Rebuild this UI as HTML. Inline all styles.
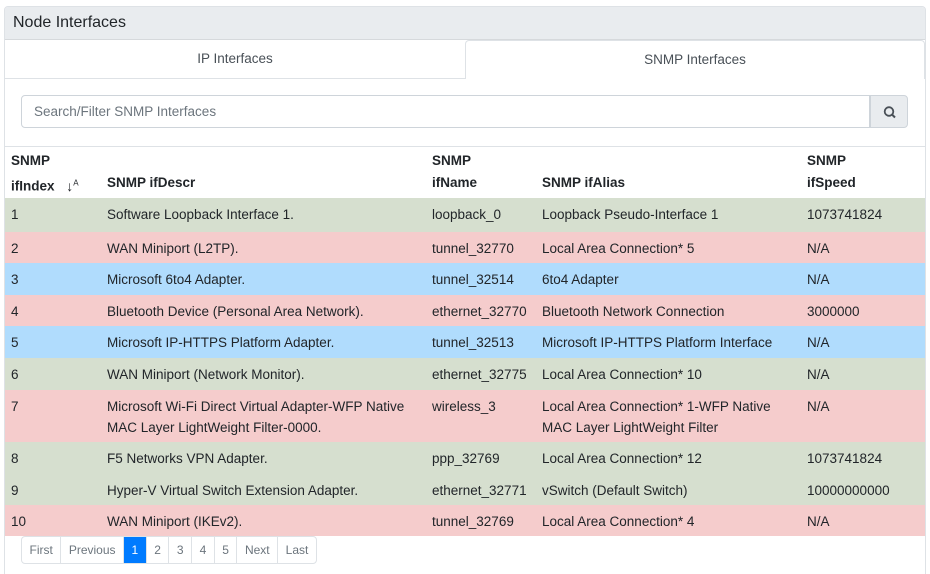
<!DOCTYPE html>
<html style="overflow:hidden"><head><style>
html,body{overflow:hidden}
body{margin:0;background:#fff;font-family:"Liberation Sans",sans-serif;font-size:13.5px;color:#212529;width:930px;height:574px;position:relative}
.card{position:absolute;left:4px;top:6px;width:920px;height:575px;border:1px solid #dee2e6;border-radius:4px;overflow:hidden}
.hdr{height:32px;background:#e9ecef;border-bottom:1px solid #d6d9dc;font-size:16px;line-height:32px;padding-left:8px;color:#212529}
.tab{position:absolute;top:33px;height:38px;line-height:38px;text-align:center;font-size:13.5px;color:#495057}
.t1{left:0;width:460px;border-bottom:1px solid #dee2e6}
.t2{left:460px;width:460px;border:1px solid #dee2e6;border-bottom:none;border-radius:4px 4px 0 0;box-sizing:border-box;height:39px}
.inp{position:absolute;left:16px;top:88px;width:849px;height:33px;border:1px solid #ced4da;border-radius:4px 0 0 4px;box-sizing:border-box;padding-left:12px;line-height:31px;color:#6c757d}
.btn{position:absolute;left:865px;top:88px;width:38px;height:33px;background:#e9ecef;border:1px solid #ced4da;border-radius:0 4px 4px 0;box-sizing:border-box}
.sep{position:absolute;left:0;top:139px;width:920px;border-top:1px solid #dee2e6}
.th{position:absolute;font-weight:bold;line-height:22px}
.row{position:absolute;left:0;width:920px}
.row span{position:absolute;top:6px;line-height:21px}
.g{background:#d6dfcf}.p{background:#f5cccc}.b{background:#b0dcfd}
.pg{position:absolute;left:16px;top:529px;display:flex;border:1px solid #dee2e6;border-radius:4px;font-size:12px;height:26px;line-height:26px}
.pg div{padding:0 7.5px;border-left:1px solid #dee2e6;color:#6c757d}
.pg div:first-child{border-left:none}
.pg .a{background:#007bff;color:#fff}
</style></head><body>
<div class="card">
<div class="hdr">Node Interfaces</div>
<div class="tab t1">IP Interfaces</div>
<div class="tab t2">SNMP Interfaces</div>
<div class="inp">Search/Filter SNMP Interfaces</div>
<div class="btn"><svg width="38" height="33" viewBox="0 0 38 33"><circle cx="18" cy="15.5" r="4.3" fill="none" stroke="#495057" stroke-width="1.8"/><line x1="21" y1="18.5" x2="24" y2="21.5" stroke="#495057" stroke-width="2"/></svg></div>
<div class="sep"></div>
<div class="th" style="left:6px;top:143px">SNMP<br>ifIndex <span style="font-weight:normal;font-size:14px;margin-left:8px">↓<sup style="font-size:8px">A</sup></span></div>
<div class="th" style="left:102px;top:165px">SNMP ifDescr</div>
<div class="th" style="left:427px;top:143px">SNMP<br>ifName</div>
<div class="th" style="left:537px;top:165px">SNMP ifAlias</div>
<div class="th" style="left:802px;top:143px">SNMP<br>ifSpeed</div>

<div class="row g" style="top:191px;height:34px"><span style="left:6px">1</span><span style="left:102px">Software Loopback Interface 1.</span><span style="left:427px">loopback_0</span><span style="left:537px">Loopback Pseudo-Interface 1</span><span style="left:802px">1073741824</span></div>
<div class="row p" style="top:225px;height:31px"><span style="left:6px">2</span><span style="left:102px">WAN Miniport (L2TP).</span><span style="left:427px">tunnel_32770</span><span style="left:537px">Local Area Connection* 5</span><span style="left:802px">N/A</span></div>
<div class="row b" style="top:256px;height:32px"><span style="left:6px">3</span><span style="left:102px">Microsoft 6to4 Adapter.</span><span style="left:427px">tunnel_32514</span><span style="left:537px">6to4 Adapter</span><span style="left:802px">N/A</span></div>
<div class="row p" style="top:288px;height:31px"><span style="left:6px">4</span><span style="left:102px">Bluetooth Device (Personal Area Network).</span><span style="left:427px">ethernet_32770</span><span style="left:537px">Bluetooth Network Connection</span><span style="left:802px">3000000</span></div>
<div class="row b" style="top:319px;height:32px"><span style="left:6px">5</span><span style="left:102px">Microsoft IP-HTTPS Platform Adapter.</span><span style="left:427px">tunnel_32513</span><span style="left:537px">Microsoft IP-HTTPS Platform Interface</span><span style="left:802px">N/A</span></div>
<div class="row g" style="top:351px;height:32px"><span style="left:6px">6</span><span style="left:102px">WAN Miniport (Network Monitor).</span><span style="left:427px">ethernet_32775</span><span style="left:537px">Local Area Connection* 10</span><span style="left:802px">N/A</span></div>
<div class="row p" style="top:383px;height:52px"><span style="left:6px">7</span><span style="left:102px">Microsoft Wi-Fi Direct Virtual Adapter-WFP Native<br>MAC Layer LightWeight Filter-0000.</span><span style="left:427px">wireless_3</span><span style="left:537px">Local Area Connection* 1-WFP Native<br>MAC Layer LightWeight Filter</span><span style="left:802px">N/A</span></div>
<div class="row g" style="top:435px;height:32px"><span style="left:6px">8</span><span style="left:102px">F5 Networks VPN Adapter.</span><span style="left:427px">ppp_32769</span><span style="left:537px">Local Area Connection* 12</span><span style="left:802px">1073741824</span></div>
<div class="row g" style="top:467px;height:31px"><span style="left:6px">9</span><span style="left:102px">Hyper-V Virtual Switch Extension Adapter.</span><span style="left:427px">ethernet_32771</span><span style="left:537px">vSwitch (Default Switch)</span><span style="left:802px">10000000000</span></div>
<div class="row p" style="top:498px;height:31px"><span style="left:6px">10</span><span style="left:102px">WAN Miniport (IKEv2).</span><span style="left:427px">tunnel_32769</span><span style="left:537px">Local Area Connection* 4</span><span style="left:802px">N/A</span></div>
<div class="pg"><div>First</div><div>Previous</div><div class="a">1</div><div>2</div><div>3</div><div>4</div><div>5</div><div>Next</div><div>Last</div></div>
</div>
</body></html>
